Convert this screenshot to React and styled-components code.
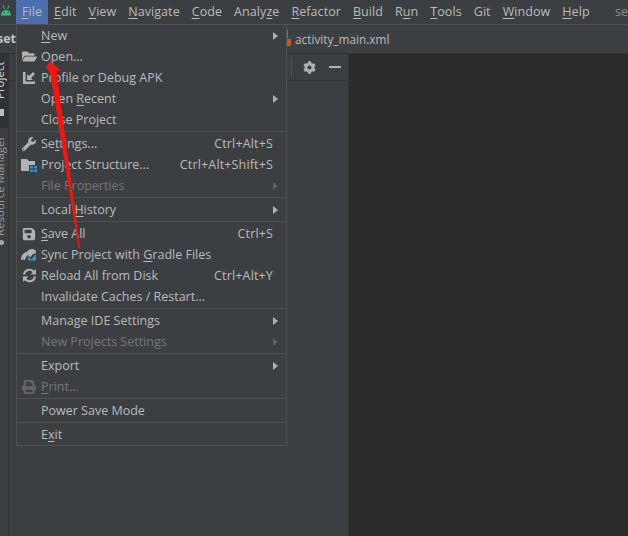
import React from "react";
import styled, { createGlobalStyle } from "styled-components";
import { FaCog, FaWrench, FaSave, FaFolderOpen, FaPrint } from "react-icons/fa";

const Global = createGlobalStyle`
  html, body { margin: 0; padding: 0; background: #3c3f41; overflow: hidden; }
  #root { width: 628px; height: 536px; }
`;

const Window = styled.div`
  position: relative; width: 628px; height: 536px; overflow: hidden;
  display: flex; flex-direction: column; background: #3c3f41; color: #bbbbbb;
  font-family: "Open Sans", "Noto Sans", sans-serif; font-size: 12.5px; line-height: 16px;
`;
const MenuBar = styled.div`
  flex: none; height: 24px; display: flex; align-items: stretch;
  border-bottom: 1px solid #515151; white-space: nowrap; letter-spacing: 0.07px;
`;
const Logo = styled.div`
  width: 16px; flex: none; display: flex; align-items: center; overflow: hidden;
`;
const TopItem = styled.div`
  display: flex; align-items: center; padding: 0 6px; white-space: pre;
  background: ${p => (p.$active ? "#4b6eaf" : "transparent")};
`;
const ProjectName = styled.div`
  margin-left: auto; width: 13px; overflow: hidden; display: flex; align-items: center; color: #8a8d8f;
`;
const TabBar = styled.div`
  flex: none; height: 28px; display: flex; align-items: center;
  border-bottom: 1px solid #323232; background: #3d4043; white-space: nowrap; font-size: 11.8px;
`;
const Crumb = styled.div`
  width: 16px; overflow: hidden; font-weight: 700; display: flex; justify-content: flex-end;
  color: #c4c4c4; flex: none; font-size: 12.5px;
`;
const Tab = styled.div`
  margin-left: 271px; display: flex; align-items: center; gap: 4px; height: 100%;
`;
const TabMarker = styled.span`
  width: 4px; display: flex; flex-direction: column; flex: none; margin-bottom: 2px;
`;
const TabMarkerLine = styled.span`
  width: 1px; height: 8px; background: #6e7173; margin-bottom: 1px;
`;
const TabMarkerFill = styled.span`
  width: 4px; height: 7px; background: #c75a22;
`;
const Workspace = styled.div`
  flex: 1; min-height: 0; display: flex;
`;
const Stripe = styled.div`
  width: 8px; flex: none; border-right: 1px solid #323232; overflow: hidden;
  display: flex; flex-direction: column;
`;
const StripeActive = styled.div`
  height: 74px; background: #2f3234; display: flex; flex-direction: column; overflow: hidden;
`;
const VerticalText = styled.div`
  writing-mode: vertical-rl; transform: rotate(180deg); white-space: nowrap; flex: none;
  margin: ${p => p.$top}px 0 0 -6px; line-height: 11px; width: 11px; height: ${p => p.$len}px;
  font-size: 11.5px; color: ${p => p.$color};
`;
const StripeBlock = styled.span`
  width: 4px; height: 7px; background: #bbbbbb; margin: 10px 0 0 0; flex: none;
`;
const StripeDot = styled.span`
  width: 5px; height: 5px; border-radius: 50%; background: #a9a9a9; margin: 4px 0 0 -1px; flex: none;
`;
const ProjectPanel = styled.div`
  width: 339px; flex: none; display: flex; flex-direction: column; border-right: 1px solid #323232;
`;
const PanelHeader = styled.div`
  height: 26px; flex: none; display: flex; align-items: center; justify-content: flex-end;
  border-bottom: 1px solid #323232; color: #afb1b3; padding-right: 7px;
`;
const HeaderDivider = styled.span`
  width: 1px; height: 20px; background: #515151; margin-right: 11px;
`;
const HeaderGear = styled.span`
  display: flex; margin-right: 13px;
`;
const Minus = styled.span`
  width: 12px; height: 2px; background: #afb1b3;
`;
const Editor = styled.div`
  flex: 1; background: #2b2b2b;
`;
const Menu = styled.div`
  position: absolute; left: 16px; top: 24px; width: 269px; border: 1px solid #515151;
  background: #3c3f41; white-space: nowrap;
`;
const Row = styled.div`
  height: 21px; display: flex; align-items: center; padding: 0 8px 0 4px;
  color: ${p => (p.$disabled ? "#777777" : "#bbbbbb")};
`;
const IconSlot = styled.span`
  width: 16px; height: 16px; margin-right: 4px; flex: none; display: flex; align-items: center; justify-content: center;
  color: #afb1b3;
`;
const Label = styled.span`
  flex: 1; white-space: pre;
`;
const Shortcut = styled.span`
  margin-right: 5px; letter-spacing: 0.15px;
`;
const Arrow = styled.span`
  width: 0; height: 0; border-left: 5px solid ${p => (p.$disabled ? "#5f6264" : "#afb1b3")};
  border-top: 4px solid transparent; border-bottom: 4px solid transparent;
`;
const Separator = styled.div`
  height: 3px; display: flex; align-items: flex-start; padding-top: 1px; box-sizing: border-box;
  &::before { content: ""; display: block; width: 100%; height: 1px; background: #515151; }
`;
const Mark = styled.span`
  text-decoration: underline; text-underline-offset: 2px; text-decoration-thickness: 1px;
`;
const ArrowOverlay = styled.svg`
  position: absolute; left: 0; top: 0; pointer-events: none;
`;

const AndroidIcon = () => (
  <svg width="16" height="24" viewBox="0 0 16 24">
    <path d="M1 15.500a5 5.500 0 0 1 10 0z" fill="#3dbd7d" />
    <path d="M3 5.500l1.500 3.500M9 5.500L7.500 9" stroke="#3dbd7d" strokeWidth="1" />
    <rect x="3.500" y="12" width="1.200" height="1.200" fill="#3c3f41" />
    <rect x="7.500" y="12" width="1.200" height="1.200" fill="#3c3f41" />
  </svg>
);
const ProfileIcon = () => (
  <svg width="14" height="14" viewBox="0 0 14 14" fill="#afb1b3">
    <path d="M1 1h2.500v9.500H13V13H1z" />
    <path d="M5 3v6h6L9 7l4-4-2-2-4 4z" />
  </svg>
);
const StructureIcon = () => (
  <svg width="16" height="14" viewBox="0 0 16 14">
    <path d="M0 1h6l2 2h6v4H8v6H0z" fill="#afb1b3" />
    <rect x="9" y="8" width="3" height="2.500" fill="#3592c4" />
    <rect x="13" y="8" width="3" height="2.500" fill="#3592c4" />
    <rect x="9" y="11.500" width="3" height="2.500" fill="#3592c4" />
    <rect x="13" y="11.500" width="3" height="2.500" fill="#3592c4" />
  </svg>
);
const SyncIcon = () => (
  <svg width="16" height="15" viewBox="0 0 16 15">
    <path d="M0 13c0-4 2-8 6-8 1-2 3-3 5-3 2 0 4 1 4 3 0 1-1 2-3 2-1 0-1 3-3 3L7 8l-2 2-1 3H2.500l.5-3-1 3z" fill="#afb1b3" />
    <path d="M7 9l3 3.500L15 7v6.500H7z" fill="#3592c4" />
  </svg>
);
const ReloadIcon = () => (
  <svg width="15" height="15" viewBox="0 0 15 15" fill="none" stroke="#afb1b3" strokeWidth="2">
    <path d="M2 6.500A5.500 5.500 0 0 1 11.500 3.500L13 5.500" />
    <path d="M13 8.500A5.500 5.500 0 0 1 3.500 11.500L2 9.500" />
    <path d="M14 1v5.500H8.500" fill="#afb1b3" stroke="none" />
    <path d="M1 14V8.500h5.500" fill="#afb1b3" stroke="none" />
  </svg>
);

const M = Mark;
const icons = {
  open: <FaFolderOpen size={15} />,
  profile: <ProfileIcon />,
  wrench: <FaWrench size={14} />,
  structure: <StructureIcon />,
  save: <FaSave size={14} />,
  sync: <SyncIcon />,
  reload: <ReloadIcon />,
  print: <FaPrint size={14} color="#63666a" />,
};

const topItems = [
  [<M key="m">F</M>, "ile"], [<M key="m">E</M>, "dit"], [<M key="m">V</M>, "iew"], [<M key="m">N</M>, "avigate"],
  [<M key="m">C</M>, "ode"], ["Analy", <M key="m">z</M>, "e"], [<M key="m">R</M>, "efactor"], [<M key="m">B</M>, "uild"],
  ["R", <M key="m">u</M>, "n"], [<M key="m">T</M>, "ools"], ["Git"], [<M key="m">W</M>, "indow"], [<M key="m">H</M>, "elp"],
];

const groups = [
  [
    { label: [<M key="m">N</M>, "ew"], sub: true },
    { label: "Open...", icon: "open" },
    { label: "Profile or Debug APK", icon: "profile" },
    { label: ["Open ", <M key="m">R</M>, "ecent"], sub: true },
    { label: "Close Project" },
  ],
  [
    { label: ["Se", <M key="m">t</M>, "tings..."], icon: "wrench", key: "Ctrl+Alt+S" },
    { label: "Project Structure...", icon: "structure", key: "Ctrl+Alt+Shift+S" },
    { label: "File Properties", sub: true, disabled: true },
  ],
  [{ label: ["Local ", <M key="m">H</M>, "istory"], sub: true }],
  [
    { label: [<M key="m">S</M>, "ave All"], icon: "save", key: "Ctrl+S" },
    { label: ["Sync Project with ", <M key="m">G</M>, "radle Files"], icon: "sync" },
    { label: "Reload All from Disk", icon: "reload", key: "Ctrl+Alt+Y" },
    { label: "Invalidate Caches / Restart..." },
  ],
  [
    { label: "Manage IDE Settings", sub: true },
    { label: "New Projects Settings", sub: true, disabled: true },
  ],
  [
    { label: "Export", sub: true },
    { label: [<M key="m">P</M>, "rint..."], icon: "print", disabled: true },
  ],
  [{ label: "Power Save Mode" }],
  [{ label: ["E", <M key="m">x</M>, "it"] }],
];

export default function App() {
  return (
    <Window>
      <Global />
      <MenuBar>
        <Logo><AndroidIcon /></Logo>
        {topItems.map((t, i) => (
          <TopItem key={i} $active={i === 0}>{t}</TopItem>
        ))}
        <ProjectName>se</ProjectName>
      </MenuBar>
      <TabBar>
        <Crumb>set</Crumb>
        <Tab>
          <TabMarker>
            <TabMarkerLine />
            <TabMarkerFill />
          </TabMarker>
          activity_main.xml
        </Tab>
      </TabBar>
      <Workspace>
        <Stripe>
          <StripeActive>
            <VerticalText $top={7} $len={38} $color="#d8d8d8">Project</VerticalText>
            <StripeBlock />
          </StripeActive>
          <VerticalText $top={13} $len={95} $color="#9a9c9e">Resource Manager</VerticalText>
          <StripeDot />
        </Stripe>
        <ProjectPanel>
          <PanelHeader>
            <HeaderDivider />
            <HeaderGear><FaCog size={13} /></HeaderGear>
            <Minus />
          </PanelHeader>
        </ProjectPanel>
        <Editor />
      </Workspace>
      <Menu>
        {groups.map((g, gi) => (
          <React.Fragment key={gi}>
            {gi > 0 && <Separator />}
            {g.map((r, ri) => (
              <Row key={ri} $disabled={r.disabled}>
                <IconSlot>{r.icon && icons[r.icon]}</IconSlot>
                <Label>{r.label}</Label>
                {r.key && <Shortcut>{r.key}</Shortcut>}
                {r.sub && <Arrow $disabled={r.disabled} />}
              </Row>
            ))}
          </React.Fragment>
        ))}
      </Menu>
      <ArrowOverlay width="628" height="536" viewBox="0 0 628 536">
        <polygon points="50,61 61,71 56.500,71 80,248 78.500,248 50,72 46,68" fill="#f5140f" />
      </ArrowOverlay>
    </Window>
  );
}
